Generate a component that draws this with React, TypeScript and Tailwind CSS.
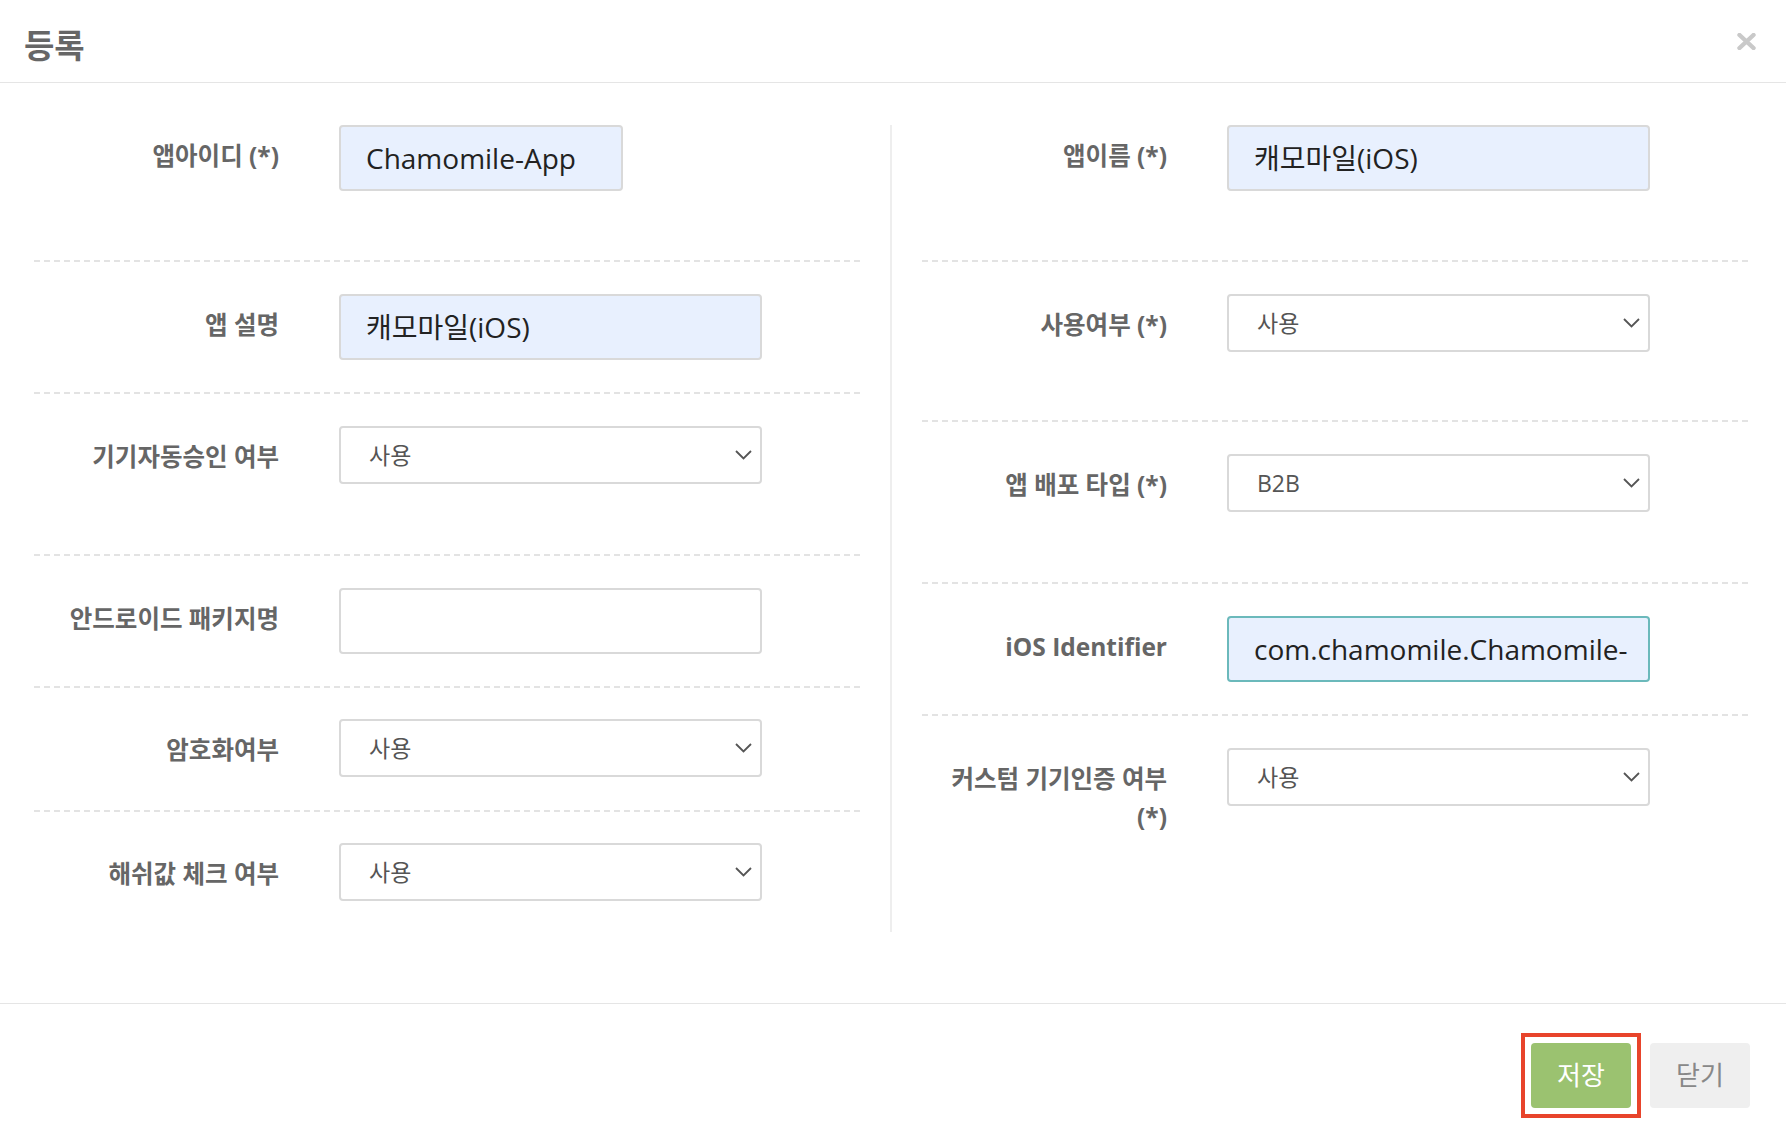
import React from 'react';

const Dash = () => (
  <div className="h-[2px] w-full bg-[repeating-linear-gradient(to_right,#e3e3e3_0_6px,transparent_6px_10px)]" />
);

const Chevron = () => (
  <svg width="17" height="10" viewBox="0 0 17 10" className="absolute right-[8px] top-1/2 -translate-y-1/2">
    <polyline points="1,1 8.5,8.5 16,1" fill="none" stroke="#555" strokeWidth="1.8" />
  </svg>
);

const TextBox = ({ value, wide = true, focus = false }: { value: string; wide?: boolean; focus?: boolean }) => (
  <div
    className={`h-[66px] ${wide ? 'w-[423px]' : 'w-[284px]'} rounded-[4px] border-2 ${
      focus ? 'border-[#6bb9bb]' : 'border-[#d9d9d9]'
    } bg-[#e8f0fe] px-[25px] flex items-center text-[28px] text-[#222] whitespace-nowrap overflow-hidden`}
  >
    {value}
  </div>
);

const EmptyBox = () => (
  <div className="h-[66px] w-[423px] rounded-[4px] border-2 border-[#d9d9d9] bg-white" />
);

const SelectBox = ({ value }: { value: string }) => (
  <div className="relative h-[58px] w-[423px] rounded-[4px] border-2 border-[#d9d9d9] bg-white pl-[28px] flex items-center text-[23px] text-[#555]">
    {value}
    <Chevron />
  </div>
);

const Row = ({ label, children, className }: { label: React.ReactNode; children: React.ReactNode; className: string }) => (
  <div className={`flex items-start ${className}`}>
    <div className="w-[245px] shrink-0 pt-[12px] text-right text-[24.5px] leading-[38px] font-bold text-[#666]">
      {label}
    </div>
    <div className="ml-[60px]">{children}</div>
  </div>
);

export default function App() {
  return (
    <div className="w-full h-[1142px] bg-white font-['Open_Sans','Noto_Sans_CJK_KR',sans-serif]">
      {/* header */}
      <div className="h-[83px] border-b border-[#e5e5e5] flex items-start justify-between pl-[24px] pr-[30px]">
        <h1 className="pt-[26px] text-[33px] leading-[40px] font-bold text-[#666]">등록</h1>
        <svg width="19" height="17" viewBox="0 0 19 17" className="mt-[33px]">
          <path d="M2.5 2 L16.5 15 M16.5 2 L2.5 15" stroke="#c9c9c9" strokeWidth="4.4" strokeLinecap="round" />
        </svg>
      </div>

      {/* body */}
      <div className="h-[920px] pt-[42px] px-[34px] flex items-start">
        <div className="w-[826px]">
          <Row label="앱아이디 (*)" className="pb-[69px]">
            <TextBox value="Chamomile-App" wide={false} />
          </Row>
          <Dash />
          <Row label="앱 설명" className="pt-[32px] pb-[32px]">
            <TextBox value="캐모마일(iOS)" />
          </Row>
          <Dash />
          <Row label="기기자동승인 여부" className="pt-[32px] pb-[70px]">
            <SelectBox value="사용" />
          </Row>
          <Dash />
          <Row label="안드로이드 패키지명" className="pt-[32px] pb-[32px]">
            <EmptyBox />
          </Row>
          <Dash />
          <Row label="암호화여부" className="pt-[31px] pb-[33px]">
            <SelectBox value="사용" />
          </Row>
          <Dash />
          <Row label="해쉬값 체크 여부" className="pt-[31px]">
            <SelectBox value="사용" />
          </Row>
        </div>

        <div className="mx-[30px] w-[2px] h-[807px] bg-[#eeeeee] shrink-0" />

        <div className="flex-1">
          <Row label="앱이름 (*)" className="pb-[69px]">
            <TextBox value="캐모마일(iOS)" />
          </Row>
          <Dash />
          <Row label="사용여부 (*)" className="pt-[32px] pb-[68px]">
            <SelectBox value="사용" />
          </Row>
          <Dash />
          <Row label="앱 배포 타입 (*)" className="pt-[32px] pb-[70px]">
            <SelectBox value="B2B" />
          </Row>
          <Dash />
          <Row label="iOS Identifier" className="pt-[32px] pb-[32px]">
            <TextBox value="com.chamomile.Chamomile-" focus />
          </Row>
          <Dash />
          <Row
            label={
              <>
                커스텀 기기인증 여부
                <br />
                (*)
              </>
            }
            className="pt-[32px]"
          >
            <SelectBox value="사용" />
          </Row>
        </div>
      </div>

      {/* footer */}
      <div className="border-t border-[#e5e5e5] pt-[29px] pr-[36px] flex items-center justify-end gap-[9px]">
        <div className="border-4 border-[#e8442b] p-[6px]">
          <button className="h-[65px] w-[100px] rounded-[4px] bg-[#9bc270] text-[26px] text-white">저장</button>
        </div>
        <button className="h-[65px] w-[100px] rounded-[4px] bg-[#efefef] text-[26px] text-[#888]">닫기</button>
      </div>
    </div>
  );
}
